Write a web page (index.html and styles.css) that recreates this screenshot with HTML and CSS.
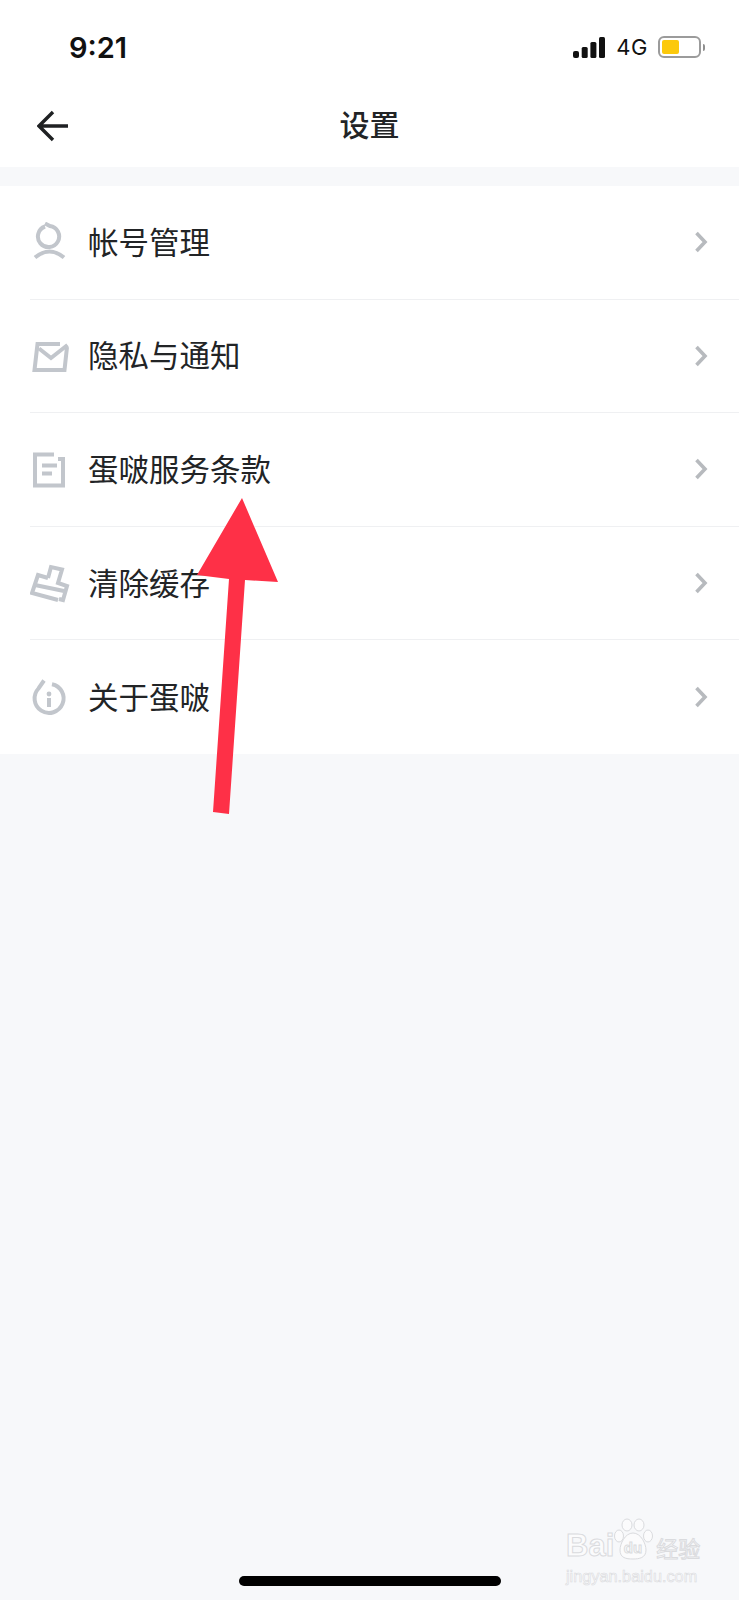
FILE: index.html
```html
<!DOCTYPE html>
<html lang="zh-CN">
<head>
    <meta charset="UTF-8">
    <meta name="viewport" content="width=device-width, initial-scale=1.0">
    <title>设置</title>
    <link rel="stylesheet" href="styles.css">
</head>
<body>

    <div class="status-bar">
        <span class="time">9:21</span>
        <div class="status-right">
            <svg class="signal" width="32" height="21" viewBox="0 0 32 21">
                <rect x="0" y="14" width="6" height="7" rx="2"/>
                <rect x="8.7" y="10" width="6" height="11" rx="1.5"/>
                <rect x="17.4" y="5" width="6" height="16" rx="1.5"/>
                <rect x="26" y="0" width="6" height="21" rx="1.5"/>
            </svg>
            <span class="network">4G</span>
            <div class="battery"><div class="battery-level"></div></div>
            <div class="battery-nub"></div>
        </div>
    </div>

    <div class="nav">
        <svg class="back-icon" width="32" height="32" viewBox="0 0 32 32">
            <path d="M16 2 L2 16 L16 30 M2 16 H31"/>
        </svg>
        <span class="nav-title">设置</span>
    </div>

    <div class="list">
        <div class="row">
            <svg class="row-icon" width="40" height="40" viewBox="0 0 40 40">
                <path d="M15 4.5 A10.6 10.6 0 1 0 20 4 L15 1.5"/>
                <path d="M5 35.5 Q19.5 23.5 34 35.5"/>
            </svg>
            <span class="row-label">帐号管理</span>
            <svg class="chevron" width="14" height="22" viewBox="0 0 14 22"><path d="M2.5 2 L11 11 L2.5 20"/></svg>
        </div>
        <div class="row">
            <svg class="row-icon" width="40" height="40" viewBox="0 0 40 40">
                <path d="M30 8 H7.5 L4.5 34 H34.5 L37 11"/>
                <path d="M9 12.5 L21 22 L37.5 9"/>
            </svg>
            <span class="row-label">隐私与通知</span>
            <svg class="chevron" width="14" height="22" viewBox="0 0 14 22"><path d="M2.5 2 L11 11 L2.5 20"/></svg>
        </div>
        <div class="row">
            <svg class="row-icon" width="40" height="40" viewBox="0 0 40 40">
                <path d="M24 5.5 H5 V36.5 H33 V10 H28"/>
                <path d="M12 16.5 H27 M12 24.5 H22"/>
            </svg>
            <span class="row-label">蛋啵服务条款</span>
            <svg class="chevron" width="14" height="22" viewBox="0 0 14 22"><path d="M2.5 2 L11 11 L2.5 20"/></svg>
        </div>
        <div class="row">
            <svg class="row-icon" width="40" height="40" viewBox="0 0 40 40">
                <path d="M18 15 L21 4 L32 6.5 L28 20 L37 23 L33 37 L29 36"/>
                <path d="M18 15 L8 12 L2 30 L28 37"/>
                <path d="M5 22 L34 28"/>
            </svg>
            <span class="row-label">清除缓存</span>
            <svg class="chevron" width="14" height="22" viewBox="0 0 14 22"><path d="M2.5 2 L11 11 L2.5 20"/></svg>
        </div>
        <div class="row">
            <svg class="row-icon" width="40" height="40" viewBox="0 0 40 40">
                <path d="M22 7.2 A14.5 14.5 0 1 1 8.5 11.5 L14 3.5"/>
                <circle class="icon-dot" cx="19" cy="17" r="2.4"/>
                <path d="M19 21 V30"/>
            </svg>
            <span class="row-label">关于蛋啵</span>
            <svg class="chevron" width="14" height="22" viewBox="0 0 14 22"><path d="M2.5 2 L11 11 L2.5 20"/></svg>
        </div>
    </div>

    <div class="home-bar"></div>

    <!-- Red annotation arrow drawn over the list -->
    <svg class="annotation" width="739" height="1600" viewBox="0 0 739 1600">
        <polygon points="242,498 278,582 245,580 229,814 213,812 229,579 197,575"/>
    </svg>

    <!-- Watermark -->
    <div class="watermark">
        <div class="wm-top">
            <span class="wm-bai">Bai</span>
            <svg class="wm-paw" width="40" height="44" viewBox="0 0 40 44">
                <ellipse cx="14" cy="7" rx="5" ry="6"/>
                <ellipse cx="26" cy="7" rx="5" ry="6"/>
                <ellipse cx="6" cy="18" rx="4.5" ry="6"/>
                <ellipse cx="35" cy="18" rx="4.5" ry="6"/>
                <path d="M20 15 C28 15 33 26 33 32 C33 40 26 41 20 41 C13 41 7 40 7 32 C7 26 12 15 20 15 Z"/>
                <text x="20" y="35" text-anchor="middle">du</text>
            </svg>
            <span class="wm-cn">经验</span>
        </div>
        <div class="wm-url">jingyan.baidu.com</div>
    </div>

</body>
</html>
```

FILE: styles.css
```css
* {
    box-sizing: border-box;
}
body {
    margin: 0;
    height: 1600px;
    overflow: hidden;
    position: relative;
    background-color: #f7f8fa;
    font-family: "Noto Sans CJK SC", "Liberation Sans", sans-serif;
    color: #222426;
}

/* Status bar */
.status-bar {
    height: 85px;
    background: #fff;
    padding: 9px 34px 0 69px;
    display: flex;
    justify-content: space-between;
    align-items: center;
}
.time {
    font-family: Inter, "Liberation Sans", sans-serif;
    font-size: 29px;
    font-weight: 600;
    color: #111;
}
.status-right {
    display: flex;
    align-items: center;
}
.signal {
    fill: #111;
    margin-right: 11px;
}
.network {
    font-family: Inter, "Liberation Sans", sans-serif;
    font-size: 22px;
    letter-spacing: 0.5px;
    color: #111;
    margin-right: 10px;
}
.battery {
    width: 43px;
    height: 22px;
    border: 2px solid #9b9b9b;
    border-radius: 6px;
    padding: 2px;
}
.battery-level {
    width: 17px;
    height: 14px;
    background: #fcc90b;
    border-radius: 2px;
}
.battery-nub {
    width: 2px;
    height: 7px;
    margin-left: 2px;
    background: #8f8f8f;
    border-radius: 0 2px 2px 0;
}

/* Nav */
.nav {
    height: 82px;
    background: #fff;
    display: flex;
    align-items: center;
    justify-content: center;
    position: relative;
    margin-bottom: 19px;
}
.back-icon {
    position: absolute;
    left: 37px;
    top: 25px;
    fill: none;
    stroke: #1f2123;
    stroke-width: 3.4;
}
.nav-title {
    font-size: 30px;
    font-weight: 500;
    line-height: 36px;
    padding-bottom: 6px;
}

/* List */
.list {
    background: #fff;
}
.row {
    height: 113.6px;
    margin-left: 30px;
    padding-right: 31px;
    display: flex;
    align-items: center;
    border-bottom: 1px solid #eff0f2;
}
.row:last-child {
    border-bottom: none;
}
.row-icon {
    flex: none;
    fill: none;
    stroke: #c2c6cc;
    stroke-width: 4;
}
.row-icon .icon-dot {
    fill: #c2c6cc;
    stroke: none;
}
.row-label {
    flex: 1;
    margin-left: 18px;
    font-size: 30.5px;
    line-height: 40px;
    padding-bottom: 3px;
}
.chevron {
    fill: none;
    stroke: #b7babe;
    stroke-width: 3.6;
}

/* Home indicator */
.home-bar {
    position: absolute;
    left: 239px;
    bottom: 14px;
    width: 262px;
    height: 10px;
    border-radius: 5px;
    background: #000;
}

/* Overlays */
.annotation {
    position: absolute;
    left: 0;
    top: 0;
    fill: #fe3047;
}
.watermark {
    position: absolute;
    left: 566px;
    top: 1518px;
    width: 136px;
    color: #fbfbfc;
    font-family: "Liberation Sans", sans-serif;
    -webkit-text-stroke: 1px #dadbde;
}
.wm-top {
    display: flex;
    align-items: flex-end;
    height: 46px;
    white-space: nowrap;
}
.wm-bai {
    flex: none;
    font-size: 31px;
    font-weight: 700;
    line-height: 36px;
}
.wm-paw {
    flex: none;
    margin-left: -1px;
    fill: #fbfbfc;
    stroke: #dadbde;
    stroke-width: 1;
    margin-bottom: 2px;
}
.wm-paw text {
    font-size: 15px;
    font-weight: 700;
}
.wm-cn {
    flex: none;
    font-family: "Noto Sans CJK SC", sans-serif;
    font-size: 22px;
    line-height: 34px;
    margin-left: 3px;
}
.wm-url {
    font-size: 16.3px;
    line-height: 20px;
    margin-top: 2px;
    white-space: nowrap;
    -webkit-text-stroke: 0.6px #dadbde;
}
```
